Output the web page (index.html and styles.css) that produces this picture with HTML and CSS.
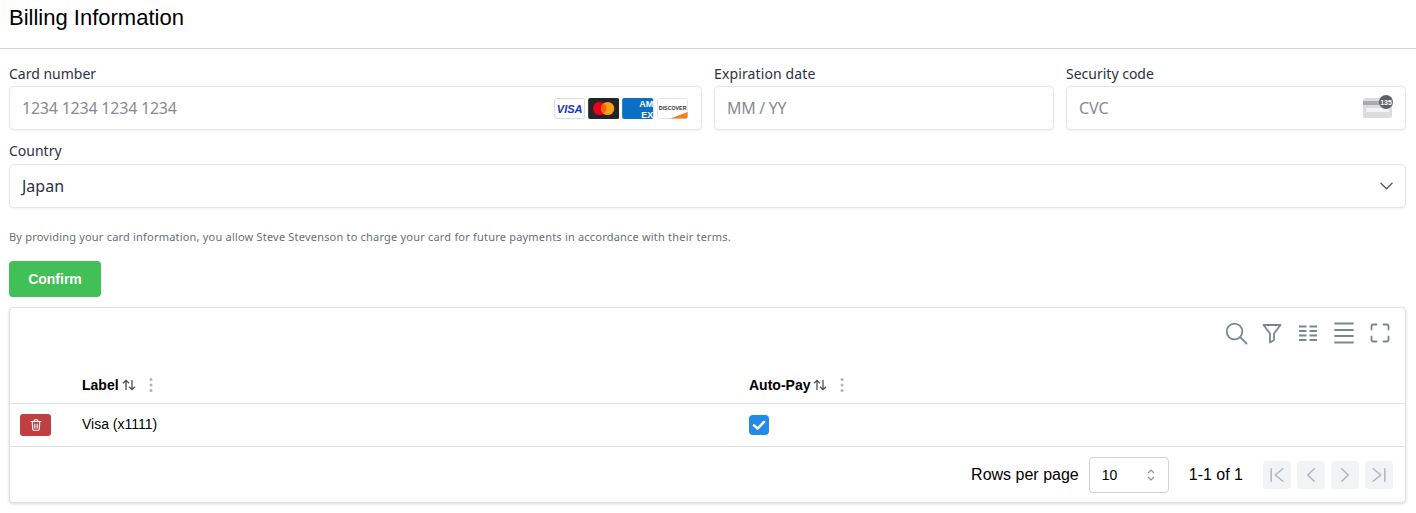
FILE: index.html
```html
<!DOCTYPE html>
<html lang="en">
<head>
<meta charset="utf-8">
<title>Billing Information</title>
<link rel="stylesheet" href="styles.css">
</head>
<body>
<header class="title-bar"><h1 class="title">Billing Information</h1></header>
<main class="content">
  <form class="form-grid">
    <div class="field">
      <label class="label">Card number</label>
      <div class="input"><span class="placeholder digits">1234 1234 1234 1234</span>
        <span class="brands">
          <svg class="brand" viewBox="0 0 31 21"><rect x=".5" y=".5" width="30" height="20" rx="2" fill="#fff" stroke="#d9dde3"/><text x="15.500" y="15" class="visa-t">VISA</text></svg>
          <svg class="brand" viewBox="0 0 31 21"><rect width="31" height="21" rx="2" fill="#252525"/><circle cx="11.500" cy="10.500" r="6.600" fill="#eb001b"/><circle cx="19.500" cy="10.500" r="6.600" fill="#f79e1b"/><path d="M15.500 5.300a6.600 6.600 0 0 1 0 10.400a6.600 6.600 0 0 1 0-10.400z" fill="#ff5f00"/></svg>
          <svg class="brand" viewBox="0 0 31 21"><rect width="31" height="21" rx="2" fill="#0b6fc6"/><text x="31" y="9" class="amex-t">AM</text><text x="31" y="19.500" class="amex-t">EX</text></svg>
          <svg class="brand" viewBox="0 0 31 21"><rect x=".5" y=".5" width="30" height="20" rx="2" fill="#fff" stroke="#e3e5e8"/><path d="M13 20.500 30.500 14v4.500a2 2 0 0 1-2 2z" fill="#f48120"/><text x="15.500" y="11.500" class="disc-t">DISCOVER</text></svg>
        </span>
      </div>
    </div>
    <div class="field">
      <label class="label label-wide">Expiration date</label>
      <div class="input"><span class="placeholder tight">MM / YY</span></div>
    </div>
    <div class="field">
      <label class="label">Security code</label>
      <div class="input"><span class="placeholder">CVC</span>
        <svg class="cvc" viewBox="0 0 30 24"><rect y="3" width="29" height="20" rx="2" fill="#dcdcde"/><rect y="6" width="29" height="4" fill="#a9a9ae"/><rect x="3" y="13" width="23" height="4" fill="#f3f3f4"/><circle cx="23" cy="7" r="7" fill="#5f5f6b"/><text x="23" y="9.500" class="cvc-t">135</text></svg>
      </div>
    </div>
    <div class="field field-wide">
      <label class="label">Country</label>
      <div class="input"><span class="value">Japan</span>
        <svg class="chevron" viewBox="0 0 14 8"><path d="M1 1l6 6 6-6" fill="none" stroke="#5f6068" stroke-width="1.600" stroke-linecap="round" stroke-linejoin="round"/></svg>
      </div>
    </div>
  </form>
  <p class="terms">By providing your card information, you allow Steve Stevenson to charge your card for future payments in accordance with their terms.</p>
  <button class="confirm" type="button">Confirm</button>

  <section class="card">
    <div class="toolbar">
      <svg class="tool" viewBox="0 0 24 24"><circle cx="10.500" cy="10.500" r="7.800"/><path d="M16.200 16.200 22.500 22.500"/></svg>
      <svg class="tool" viewBox="0 0 24 24"><path d="M3.500 4h17l-6.500 8.500V19l-4 2.500v-9z" stroke-linejoin="round"/></svg>
      <svg class="tool tool-cols" viewBox="0 0 24 24"><path d="M3 5.500h7.500M3 10h7.500M3 14.500h7.500M3 19h7.500M13.500 5.500H21M13.500 10H21M13.500 14.500H21M13.500 19H21"/></svg>
      <svg class="tool" viewBox="0 0 24 24"><path d="M3 2.500h18M3 9h18M3 15h18M3 21.500h18"/></svg>
      <svg class="tool" viewBox="0 0 24 24"><path d="M3.500 8.500V5a1.500 1.500 0 0 1 1.500-1.500h3.500M15.500 3.500H19A1.500 1.500 0 0 1 20.500 5v3.500M20.500 15.500V19a1.500 1.500 0 0 1-1.500 1.500h-3.500M8.500 20.500H5A1.500 1.500 0 0 1 3.500 19v-3.500"/></svg>
    </div>
    <div class="row head-row">
      <div class="cell-action"></div>
      <div class="cell-label head">Label
        <svg class="sort" viewBox="0 0 14 12"><path d="M4 11V1.500M1 4.300 4 1.300l3 3M10 1v9.500M7 7.700l3 3 3-3"/></svg>
        <svg class="dots" viewBox="0 0 4 16"><circle cx="2" cy="2.500" r="1.500"/><circle cx="2" cy="8" r="1.500"/><circle cx="2" cy="13.500" r="1.500"/></svg>
      </div>
      <div class="cell-pay head">Auto-Pay
        <svg class="sort" viewBox="0 0 14 12"><path d="M4 11V1.500M1 4.300 4 1.300l3 3M10 1v9.500M7 7.700l3 3 3-3"/></svg>
        <svg class="dots" viewBox="0 0 4 16"><circle cx="2" cy="2.500" r="1.500"/><circle cx="2" cy="8" r="1.500"/><circle cx="2" cy="13.500" r="1.500"/></svg>
      </div>
    </div>
    <div class="row body-row">
      <div class="cell-action">
        <button class="delete" type="button" aria-label="Delete">
          <svg viewBox="0 0 24 24"><path d="M3.500 6h17M9 6V4.500a1.500 1.500 0 0 1 1.500-1.500h3A1.500 1.500 0 0 1 15 4.500V6M5.500 6l1 13.500a2 2 0 0 0 2 1.500h7a2 2 0 0 0 2-1.500l1-13.500M10 10.500v6.500M14 10.500v6.500"/></svg>
        </button>
      </div>
      <div class="cell-label cell-text">Visa (x1111)</div>
      <div class="cell-pay"><span class="check"><svg viewBox="0 0 20 20"><path d="M5 10.300 8.500 13.500 15 7"/></svg></span></div>
    </div>
    <div class="footer">
      <span class="rows-label">Rows per page</span>
      <div class="rows-select"><span>10</span>
        <svg viewBox="0 0 10 16"><path d="M2 6l3-3 3 3M2 10l3 3 3-3"/></svg>
      </div>
      <span class="range">1-1 of 1</span>
      <div class="pager">
        <span class="page-btn"><svg viewBox="0 0 24 24"><path d="M5 4.500v15M19 4.500 10 12l9 7.500"/></svg></span>
        <span class="page-btn"><svg viewBox="0 0 24 24"><path d="M16 4.500 8 12l8 7.500"/></svg></span>
        <span class="page-btn"><svg viewBox="0 0 24 24"><path d="M8 4.500 16 12l-8 7.500"/></svg></span>
        <span class="page-btn"><svg viewBox="0 0 24 24"><path d="M19 4.500v15M5 4.500 14 12l-9 7.500"/></svg></span>
      </div>
    </div>
  </section>
</main>
</body>
</html>
```
FILE: styles.css
```css
* { box-sizing: border-box; }
html, body { margin: 0; padding: 0; background: #fff; }
body { font-family: "Liberation Sans", Arial, sans-serif; color: #000; width: 1416px; height: 513px; overflow: hidden; }

.title-bar { height: 49px; border-bottom: 1px solid #ced4e0; padding: 5px 9px 0; }
.title { margin: 0; font-size: 22px; line-height: 26px; font-weight: 400; }

.content { padding: 0 10px 0 9px; }
.form-grid { display: grid; grid-template-columns: 693px 340px 340px; column-gap: 12px; row-gap: 11px; padding-top: 15px; }
.field-wide { grid-column: 1 / -1; }
.label { display: block; font-family: "Noto Sans", sans-serif; font-size: 14px; line-height: 19px; color: #30313d; margin-bottom: 3px; height: 19px; }
.field-wide .label { margin-bottom: 4px; }
.label-wide { letter-spacing: .12px; }
.input { height: 44px; border: 1px solid #e6e6e6; border-radius: 5px; box-shadow: 0 1px 3px rgba(0,0,0,.05); display: flex; align-items: center; justify-content: space-between; padding: 0 12px; font-family: "Noto Sans", sans-serif; font-size: 16px; background: #fff; }
.placeholder { color: #8a8a93; }
.digits { letter-spacing: -.22px; }
.tight { letter-spacing: -.3px; }
.value { color: #30313d; }
.brands { display: flex; gap: 3px; margin-right: 1px; }
.brand { width: 31.300px; height: 21px; display: block; }
.visa-t { font: italic 700 11px "Liberation Sans", sans-serif; fill: #1434cb; text-anchor: middle; }
.amex-t { font: 700 9px "Liberation Sans", sans-serif; fill: #fff; text-anchor: end; }
.disc-t { font: 700 5.300px "Liberation Sans", sans-serif; fill: #333; text-anchor: middle; }
.cvc { width: 30px; height: 24px; display: block; margin-top: -3px; }
.cvc-t { font: 700 7px "Liberation Sans", sans-serif; fill: #fff; text-anchor: middle; }
.chevron { width: 13px; height: 8px; display: block; }

.terms { margin: 21px 0 0; height: 16px; font-family: "Noto Sans", sans-serif; font-size: 11px; line-height: 16px; letter-spacing: .2px; color: #6d6e78; }
.confirm { display: block; margin-top: 16px; width: 92px; height: 36px; border: 0; border-radius: 4px; background: #40c057; color: #fff; font: 700 14px "Liberation Sans", sans-serif; }

.card { margin-top: 10px; height: 196px; border: 1px solid #dee2e6; border-radius: 4px; box-shadow: 0 1px 3px rgba(0,0,0,.15); background: #fff; }
.toolbar { height: 58px; display: flex; justify-content: flex-end; align-items: flex-start; padding: 13px 13px 0 0; gap: 12px; }
.tool { width: 24px; height: 24px; fill: none; stroke: #7d868f; stroke-width: 1.800; stroke-linecap: round; display: block; }
.tool-cols { stroke-width: 2; stroke-linecap: butt; }
.row { display: grid; grid-template-columns: 72px 667px 1fr; align-items: center; }
.head-row { height: 38px; border-bottom: 1px solid #dee2e6; }
.body-row { height: 43px; border-bottom: 1px solid #dee2e6; }
.head { font-size: 14px; font-weight: 700; display: flex; align-items: center; }
.cell-label { font-size: 14px; }
.cell-text { padding-bottom: 2px; }
.sort { width: 14px; height: 12px; margin-left: 3px; fill: none; stroke: #4a4f55; stroke-width: 1.300; display: block; }
.dots { width: 4px; height: 16px; margin-left: 13px; fill: #adb5bd; display: block; }
.cell-action { padding-left: 10px; }
.delete { display: flex; align-items: center; justify-content: center; width: 31px; height: 22px; padding: 0; border: 0; border-radius: 3px; background: #c03f41; }
.delete svg { width: 14px; height: 14px; fill: none; stroke: #fff; stroke-width: 1.900; stroke-linejoin: round; stroke-linecap: round; }
.check { display: block; width: 20px; height: 20px; border-radius: 4px; background: #228be6; }
.check svg { display: block; width: 20px; height: 20px; fill: none; stroke: #fff; stroke-width: 2.500; stroke-linecap: round; stroke-linejoin: round; }

.footer { height: 55px; display: flex; align-items: center; justify-content: flex-end; padding: 1px 12px 0 0; font-size: 16px; }
.rows-select { width: 80px; height: 36px; margin-left: 10px; border: 1px solid #ced4da; border-radius: 4px; display: flex; align-items: center; justify-content: space-between; padding: 0 12px; font-size: 14px; }
.rows-select svg { width: 10px; height: 16px; fill: none; stroke: #868e96; stroke-width: 1.100; }
.range { margin-left: 20px; }
.pager { display: flex; gap: 6px; margin-left: 20px; }
.page-btn { width: 28px; height: 28px; border-radius: 4px; background: #f1f3f5; display: flex; align-items: center; justify-content: center; }
.page-btn svg { width: 20px; height: 20px; fill: none; stroke: #adb5bd; stroke-width: 1.800; stroke-linecap: round; stroke-linejoin: round; }
```
